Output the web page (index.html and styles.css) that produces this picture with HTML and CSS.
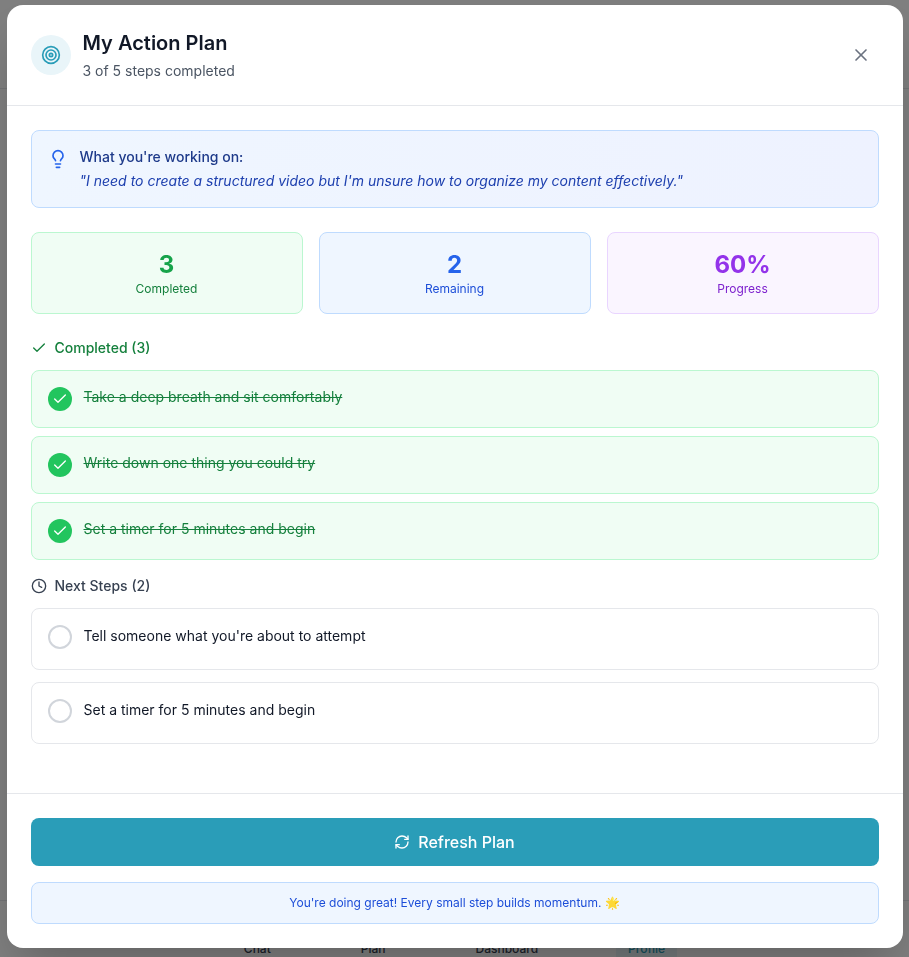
FILE: index.html
```html
<!DOCTYPE html>
<html lang="en">
<head>
  <meta charset="UTF-8" />
  <meta name="viewport" content="width=device-width, initial-scale=1" />
  <title>My Action Plan</title>
  <link rel="stylesheet" href="styles.css">
</head>
<body>
  <div class="app">
    <header class="app-header"></header>
    <main class="app-main"></main>
    <nav class="app-nav">
      <div class="tab"><span class="tab-icon"></span>Chat</div>
      <div class="tab"><span class="tab-icon"></span>Plan</div>
      <div class="tab"><span class="tab-icon"></span>Dashboard</div>
      <div class="tab tab-active"><span class="tab-icon"></span>Profile</div>
    </nav>
  </div>

  <div class="overlay">
    <div class="modal">
      <div class="modal-header">
        <div class="header-icon">
          <svg class="icon-20" viewBox="0 0 24 24"><circle cx="12" cy="12" r="10"/><circle cx="12" cy="12" r="6"/><circle cx="12" cy="12" r="2"/></svg>
        </div>
        <div class="header-text">
          <h2>My Action Plan</h2>
          <p>3 of 5 steps completed</p>
        </div>
        <button class="close-btn" aria-label="Close">
          <svg class="icon-20" viewBox="0 0 24 24"><path d="M18 6 6 18"/><path d="m6 6 12 12"/></svg>
        </button>
      </div>

      <div class="modal-body">
        <div class="context">
          <svg class="icon-20 context-icon" viewBox="0 0 24 24"><path d="M15 14c.2-1 .7-1.7 1.5-2.5 1-.9 1.5-2.2 1.5-3.5A6 6 0 0 0 6 8c0 1 .2 2.2 1.5 3.5.7.7 1.3 1.5 1.5 2.5"/><path d="M9 18h6"/><path d="M10 22h4"/></svg>
          <div>
            <p class="context-title">What you're working on:</p>
            <p class="context-quote">"I need to create a structured video but I'm unsure how to organize my content effectively."</p>
          </div>
        </div>

        <div class="stats">
          <div class="stat stat-green"><div class="stat-value">3</div><div class="stat-label">Completed</div></div>
          <div class="stat stat-blue"><div class="stat-value">2</div><div class="stat-label">Remaining</div></div>
          <div class="stat stat-purple"><div class="stat-value">60%</div><div class="stat-label">Progress</div></div>
        </div>

        <h3 class="section-title title-green">
          <svg class="icon-16" viewBox="0 0 24 24"><path d="M20 6 9 17l-5-5"/></svg>
          Completed (3)
        </h3>
        <div class="step-list list-done">
          <div class="step step-done">
            <span class="check"><svg class="icon-16" viewBox="0 0 24 24"><path d="M20 6 9 17l-5-5"/></svg></span>
            <span class="step-text">Take a deep breath and sit comfortably</span>
          </div>
          <div class="step step-done">
            <span class="check"><svg class="icon-16" viewBox="0 0 24 24"><path d="M20 6 9 17l-5-5"/></svg></span>
            <span class="step-text">Write down one thing you could try</span>
          </div>
          <div class="step step-done">
            <span class="check"><svg class="icon-16" viewBox="0 0 24 24"><path d="M20 6 9 17l-5-5"/></svg></span>
            <span class="step-text">Set a timer for 5 minutes and begin</span>
          </div>
        </div>

        <h3 class="section-title title-gray">
          <svg class="icon-16" viewBox="0 0 24 24"><circle cx="12" cy="12" r="10"/><polyline points="12 6 12 12 16 14"/></svg>
          Next Steps (2)
        </h3>
        <div class="step-list list-next">
          <div class="step step-next">
            <span class="circle"></span>
            <span class="step-text">Tell someone what you're about to attempt</span>
          </div>
          <div class="step step-next">
            <span class="circle"></span>
            <span class="step-text">Set a timer for 5 minutes and begin</span>
          </div>
        </div>
      </div>

      <div class="modal-footer">
        <button class="refresh-btn">
          <svg class="icon-16" viewBox="0 0 24 24"><path d="M3 12a9 9 0 0 1 9-9 9.75 9.75 0 0 1 6.74 2.74L21 8"/><path d="M21 3v5h-5"/><path d="M21 12a9 9 0 0 1-9 9 9.75 9.75 0 0 1-6.74-2.74L3 16"/><path d="M8 16H3v5"/></svg>
          Refresh Plan
        </button>
        <div class="encourage">You're doing great! Every small step builds momentum. 🌟</div>
      </div>
    </div>
  </div>
</body>
</html>
```

FILE: styles.css
```css
* {
  margin: 0;
  padding: 0;
  box-sizing: border-box;
}
html, body {
  height: 100%;
  overflow: hidden;
  background: #fff;
  font-family: Inter, "Noto Sans", sans-serif;
  color: #111827;
}
svg {
  fill: none;
  stroke: currentColor;
  stroke-width: 2;
  stroke-linecap: round;
  stroke-linejoin: round;
  flex-shrink: 0;
  display: block;
}
.icon-16 {
  width: 16px;
  height: 16px;
}
.icon-20 {
  width: 20px;
  height: 20px;
}

/* page behind the dialog */
.app {
  height: 100%;
  display: flex;
  flex-direction: column;
}
.app-header {
  height: 89px;
  border-bottom: 1px solid #e5e7eb;
}
.app-main {
  flex: 1;
}
.app-nav {
  height: 57px;
  flex-shrink: 0;
  border-top: 1px solid #e5e7eb;
  padding-top: 8px;
  display: flex;
  justify-content: center;
  gap: 66px;
}
.tab {
  padding: 8px 12px;
  height: 64px;
  font-size: 12px;
  line-height: 16px;
  font-weight: 500;
  color: #374151;
  border-radius: 8px;
  text-align: center;
}
.tab-icon {
  display: block;
  height: 24px;
}
.tab-active {
  background: #e9f5f9;
  color: #2a9db8;
}

/* dialog */
.overlay {
  position: fixed;
  inset: 0;
  background: rgba(0, 0, 0, 0.5);
  backdrop-filter: blur(0.5px);
  display: flex;
  justify-content: center;
  padding: 5px 6.5px 9px;
}
.modal {
  width: 100%;
  background: #fff;
  border-radius: 16px;
  box-shadow: 0 25px 50px -12px rgba(0, 0, 0, 0.25);
  display: flex;
  flex-direction: column;
  overflow: hidden;
}
.modal-header {
  display: flex;
  align-items: center;
  gap: 12px;
  padding: 24px;
  border-bottom: 1px solid #e5e7eb;
}
.header-icon {
  width: 40px;
  height: 40px;
  border-radius: 50%;
  background: #e9f5f9;
  color: #2a9db8;
  display: flex;
  align-items: center;
  justify-content: center;
}
.header-text {
  flex: 1;
}
.header-text h2 {
  font-size: 20px;
  line-height: 28px;
  font-weight: 600;
  margin-bottom: 4px;
}
.header-text p {
  font-size: 14px;
  line-height: 20px;
  color: #4b5563;
}
.close-btn {
  width: 36px;
  height: 36px;
  background: none;
  border: none;
  color: #6b7280;
  display: flex;
  align-items: center;
  justify-content: center;
  cursor: pointer;
}
.modal-body {
  flex: 1;
  padding: 24px;
}
.context {
  display: flex;
  gap: 12px;
  padding: 16px;
  background: linear-gradient(to right, #eff6ff, #eef2ff);
  border: 1px solid #bfdbfe;
  border-radius: 8px;
  font-size: 14px;
  line-height: 20px;
  margin-bottom: 24px;
}
.context-icon {
  color: #2563eb;
  margin-top: 2px;
}
.context-title {
  font-weight: 500;
  color: #1e3a8a;
  margin-bottom: 4px;
}
.context-quote {
  font-style: italic;
  color: #1e40af;
}
.stats {
  display: grid;
  grid-template-columns: repeat(3, 1fr);
  gap: 16px;
  margin-bottom: 24px;
}
.stat {
  padding: 16px;
  border: 1px solid;
  border-radius: 8px;
  text-align: center;
}
.stat-value {
  font-size: 24px;
  line-height: 32px;
  font-weight: 700;
}
.stat-label {
  font-size: 12px;
  line-height: 16px;
}
.stat-green {
  background: #f0fdf4;
  border-color: #bbf7d0;
  color: #15803d;
}
.stat-green .stat-value {
  color: #16a34a;
}
.stat-blue {
  background: #eff6ff;
  border-color: #bfdbfe;
  color: #1d4ed8;
}
.stat-blue .stat-value {
  color: #2563eb;
}
.stat-purple {
  background: #faf5ff;
  border-color: #e9d5ff;
  color: #7e22ce;
}
.stat-purple .stat-value {
  color: #9333ea;
}
.section-title {
  display: flex;
  align-items: center;
  gap: 8px;
  font-size: 14px;
  line-height: 20px;
  font-weight: 500;
  margin-bottom: 12px;
}
.title-green {
  color: #15803d;
}
.title-gray {
  color: #374151;
}
.step-list {
  display: flex;
  flex-direction: column;
}
.list-done {
  gap: 8px;
  margin-bottom: 16px;
}
.list-next {
  gap: 12px;
}
.step {
  display: flex;
  align-items: flex-start;
  gap: 12px;
  padding: 16px;
  border: 1px solid;
  border-radius: 8px;
  font-size: 14px;
  line-height: 20px;
}
.step-done {
  background: #f0fdf4;
  border-color: #bbf7d0;
  color: #15803d;
}
.step-done .step-text {
  text-decoration: line-through;
}
.step-next {
  background: #fff;
  border-color: #e5e7eb;
  color: #111827;
  min-height: 62px;
}
.step-next .step-text {
  margin-top: 1px;
}
.check {
  width: 24px;
  height: 24px;
  border-radius: 50%;
  background: #22c55e;
  color: #fff;
  display: flex;
  align-items: center;
  justify-content: center;
  flex-shrink: 0;
}
.circle {
  width: 24px;
  height: 24px;
  border-radius: 50%;
  border: 2px solid #d1d5db;
  flex-shrink: 0;
}
.modal-footer {
  padding: 24px;
  border-top: 1px solid #e5e7eb;
}
.refresh-btn {
  width: 100%;
  height: 48px;
  border: none;
  border-radius: 8px;
  background: #2a9db8;
  color: #fff;
  font-family: inherit;
  font-size: 16px;
  font-weight: 500;
  display: flex;
  align-items: center;
  justify-content: center;
  gap: 8px;
  cursor: pointer;
  margin-bottom: 16px;
}
.encourage {
  padding: 12px;
  background: #eff6ff;
  border: 1px solid #bfdbfe;
  border-radius: 8px;
  font-size: 12px;
  line-height: 16px;
  color: #1d4ed8;
  text-align: center;
}
```
